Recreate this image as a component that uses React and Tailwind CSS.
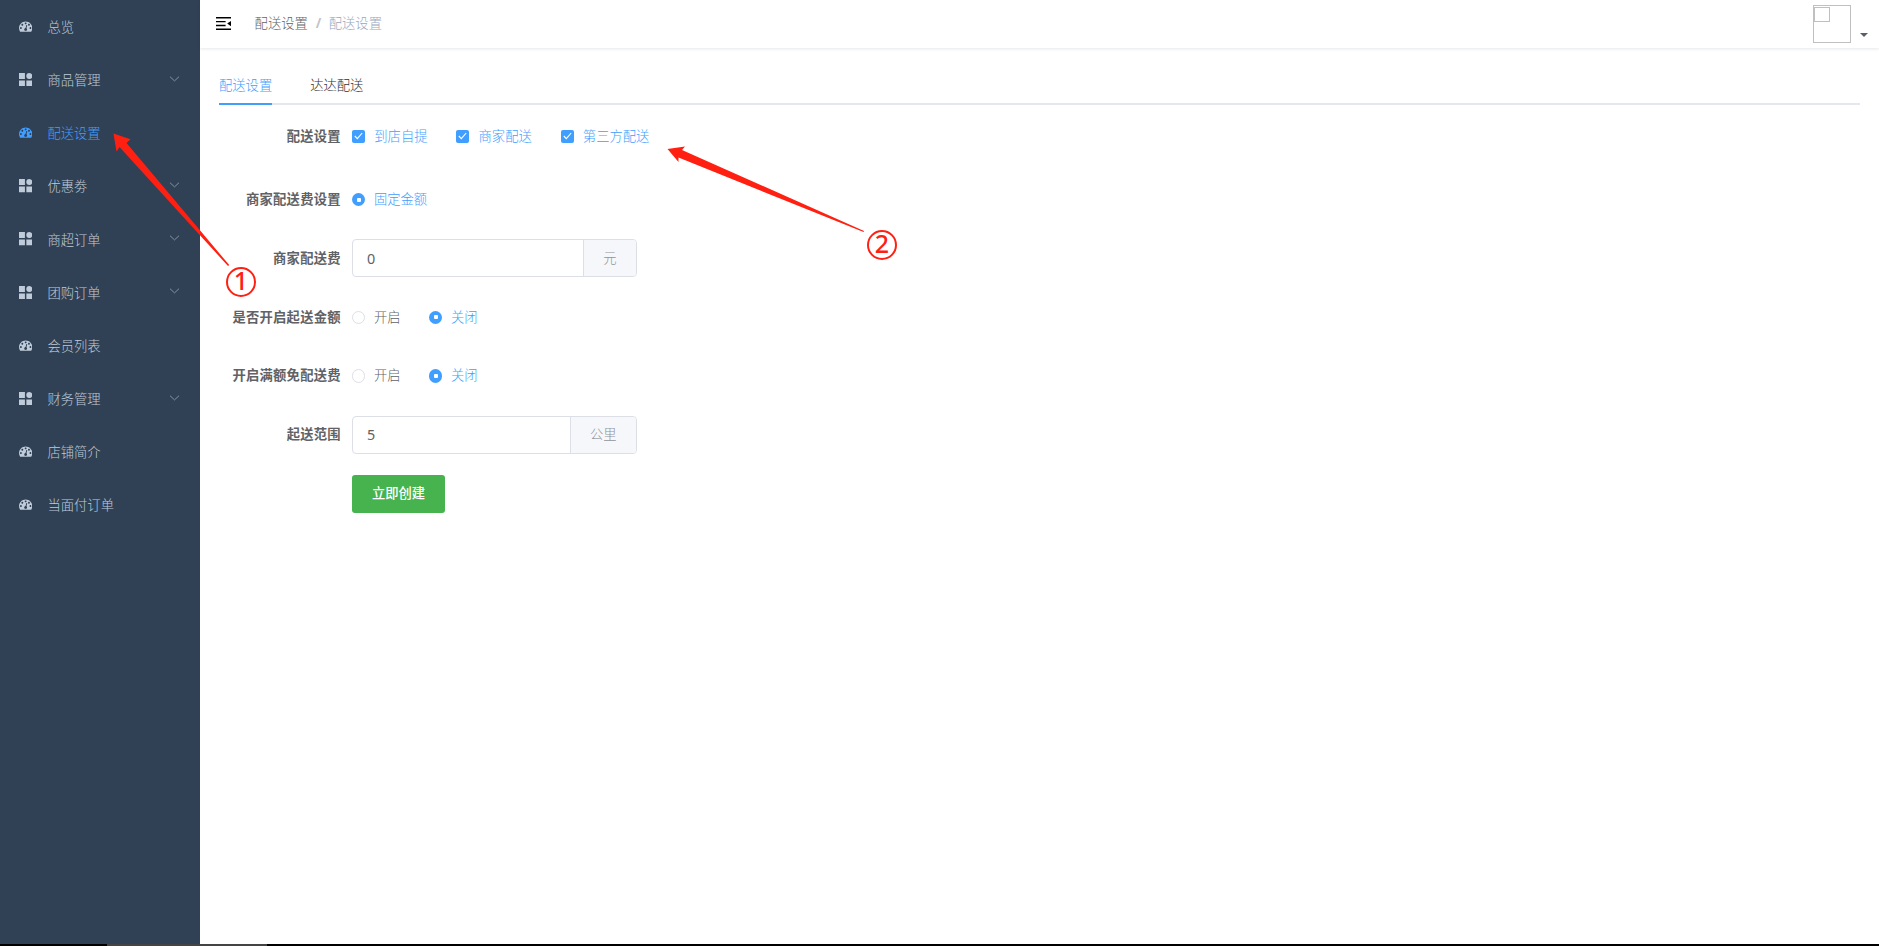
import React, { useState } from "react";

const menuItems = [
  { label: "总览", type: "dashboard" },
  { label: "商品管理", type: "component", children: true },
  { label: "配送设置", type: "dashboard", active: true },
  { label: "优惠劵", type: "component", children: true },
  { label: "商超订单", type: "component", children: true },
  { label: "团购订单", type: "component", children: true },
  { label: "会员列表", type: "dashboard" },
  { label: "财务管理", type: "component", children: true },
  { label: "店铺简介", type: "dashboard" },
  { label: "当面付订单", type: "dashboard" },
];

function DashboardIcon() {
  return (
    <svg className="w-[13.3px] h-[13.3px] shrink-0" viewBox="0 0 128 100" fill="currentColor">
      <path d="M27.429 63.638c0-2.508-.893-4.65-2.679-6.424-1.786-1.775-3.94-2.662-6.464-2.662-2.524 0-4.679.887-6.465 2.662-1.785 1.774-2.678 3.916-2.678 6.424 0 2.508.893 4.65 2.678 6.424 1.786 1.775 3.94 2.662 6.465 2.662 2.524 0 4.678-.887 6.464-2.662 1.786-1.775 2.679-3.916 2.679-6.424zm13.714-31.801c0-2.508-.893-4.65-2.679-6.424-1.785-1.775-3.94-2.662-6.464-2.662-2.524 0-4.679.887-6.464 2.662-1.786 1.774-2.679 3.916-2.679 6.424 0 2.508.893 4.65 2.679 6.424 1.785 1.774 3.94 2.662 6.464 2.662 2.524 0 4.679-.888 6.464-2.662 1.786-1.775 2.679-3.916 2.679-6.424zM71.714 65.98l7.215-27.116c.285-1.23.107-2.378-.536-3.443-.643-1.064-1.56-1.762-2.75-2.094-1.19-.33-2.333-.177-3.429.462-1.095.639-1.81 1.573-2.143 2.804l-7.214 27.116c-2.857.237-5.405 1.266-7.643 3.088-2.238 1.822-3.738 4.152-4.5 6.992-.952 3.644-.476 7.098 1.429 10.364 1.905 3.265 4.69 5.37 8.357 6.317 3.667.947 7.143.474 10.429-1.42 3.285-1.892 5.404-4.66 6.357-8.305.762-2.84.619-5.607-.429-8.305-1.047-2.697-2.762-4.85-5.143-6.46zm47.143-2.342c0-2.508-.893-4.65-2.678-6.424-1.786-1.775-3.94-2.662-6.465-2.662-2.524 0-4.678.887-6.464 2.662-1.786 1.774-2.679 3.916-2.679 6.424 0 2.508.893 4.65 2.679 6.424 1.786 1.775 3.94 2.662 6.464 2.662 2.524 0 4.679-.887 6.465-2.662 1.785-1.775 2.678-3.916 2.678-6.424zm-45.714-45.43c0-2.509-.893-4.65-2.679-6.425C68.68 10.01 66.524 9.122 64 9.122c-2.524 0-4.679.887-6.464 2.661-1.786 1.775-2.679 3.916-2.679 6.425 0 2.508.893 4.65 2.679 6.424 1.785 1.774 3.94 2.662 6.464 2.662 2.524 0 4.679-.888 6.464-2.662 1.786-1.775 2.679-3.916 2.679-6.424zm32 13.629c0-2.508-.893-4.65-2.679-6.424-1.785-1.775-3.94-2.662-6.464-2.662-2.524 0-4.679.887-6.464 2.662-1.786 1.774-2.679 3.916-2.679 6.424 0 2.508.893 4.65 2.679 6.424 1.785 1.774 3.94 2.662 6.464 2.662 2.524 0 4.679-.888 6.464-2.662 1.786-1.775 2.679-3.916 2.679-6.424zM128 63.638c0 12.351-3.357 23.78-10.071 34.286-.905 1.372-2.19 2.058-3.858 2.058H13.93c-1.667 0-2.953-.686-3.858-2.058C3.357 87.465 0 76.037 0 63.638c0-8.613 1.69-16.847 5.071-24.703C8.452 31.08 13 24.312 18.714 18.634c5.715-5.68 12.524-10.199 20.429-13.559C47.048 1.715 55.333.035 64 .035c8.667 0 16.952 1.68 24.857 5.04 7.905 3.36 14.714 7.88 20.429 13.559 5.714 5.678 10.262 12.446 13.643 20.301 3.38 7.856 5.071 16.09 5.071 24.703z" />
    </svg>
  );
}

function ComponentIcon() {
  return (
    <svg className="w-[13.3px] h-[13.3px] shrink-0" viewBox="0 0 128 128" fill="currentColor">
      <path d="M0 0h57v57H0zM0 71h57v57H0zM71 71h57v57H71z" />
      <circle cx="99" cy="28.5" r="28.5" />
    </svg>
  );
}

function Sidebar() {
  return (
    <aside className="w-[200px] shrink-0 bg-[#304156] font-light">
      <ul>
        {menuItems.map((item) => (
          <li
            key={item.label}
            className={`flex items-center h-[53.15px] pl-[19px] pr-[20px] cursor-pointer ${
              item.active ? "text-[#409eff]" : "text-[#bfcbd9]"
            }`}
          >
            {item.type === "dashboard" ? <DashboardIcon /> : <ComponentIcon />}
            <span className="ml-[15.2px] flex-1 pt-[2px]">{item.label}</span>
            {item.children && (
              <svg className="w-[11px] h-[6px] mb-[2px]" viewBox="0 0 11 6" fill="none" stroke="#8391a1">
                <path d="M1 .7l4.5 4.2L10 .7" />
              </svg>
            )}
          </li>
        ))}
      </ul>
    </aside>
  );
}

function Navbar() {
  return (
    <header className="flex justify-between h-[48px] bg-white shadow-[0_1px_3px_rgba(0,21,41,0.1)]">
      <div className="flex items-center h-[47px] pl-[16px]">
        <svg className="w-[15px] h-[13px]" viewBox="0 0 15 13" fill="#000">
          <path d="M0 0h15v1.4H0zM0 3.9h9.6v1.4H0zM0 7.8h9.6v1.4H0zM0 11.6h15V13H0zM15 3.9v5.3L11.2 6.5z" />
        </svg>
        <div className="flex ml-[23.6px] font-light">
          <span className="text-[#606266]">配送设置</span>
          <span className="mx-[8px] font-bold text-[#c0c4cc] w-[5px] text-center">/</span>
          <span className="text-[#97a8be]">配送设置</span>
        </div>
      </div>
      <div className="flex items-end pt-[5px] pr-[11px] h-[43px]">
        <div className="w-[38px] h-[38px] border border-[#c0c0c0] pt-px">
          <div className="w-[16px] h-[15px] border border-[#c0c0c0]"></div>
        </div>
        <svg className="w-[8px] h-[4px] ml-[9px] mb-[6px]" viewBox="0 0 8 4" fill="#5a5e66">
          <path d="M0 0h8L4 4z" />
        </svg>
      </div>
    </header>
  );
}

function Checkbox({ label }) {
  return (
    <label className="flex items-center mr-[28.8px] text-[#409eff] font-light">
      <span className="w-[13px] h-[13px] rounded-[2px] bg-[#409eff] flex items-center justify-center">
        <svg className="w-[9px] h-[8px]" viewBox="0 0 9 8" fill="none" stroke="#fff" strokeWidth="1.1">
          <path d="M.8 4l2.5 2.6L8.2 1" />
        </svg>
      </span>
      <span className="pl-[9.3px]">{label}</span>
    </label>
  );
}

function Radio({ label, checked, onChange }) {
  return (
    <label
      className={`flex items-center mr-[28.5px] cursor-pointer font-light ${checked ? "text-[#409eff]" : "text-[#606266]"}`}
      onClick={onChange}
    >
      {checked ? (
        <span className="w-[13.3px] h-[13.3px] rounded-full bg-[#409eff] flex items-center justify-center">
          <span className="w-[4px] h-[4px] rounded-[1px] bg-white"></span>
        </span>
      ) : (
        <span className="w-[13.3px] h-[13.3px] rounded-full border border-[#dcdfe6] bg-white"></span>
      )}
      <span className="pl-[8.7px]">{label}</span>
    </label>
  );
}

function FormItem({ label, children }) {
  return (
    <div className="flex items-center h-[38px] mb-[20.8px]">
      <div className="w-[133px] pr-[11.2px] text-right font-bold tracking-[0.25px] text-[#606266] shrink-0">{label}</div>
      {children}
    </div>
  );
}

function InputAppend({ value, onChange, unit }) {
  return (
    <div className="flex w-[285px] h-[38px] rounded-[4px] border border-[#dcdfe6] overflow-hidden">
      <input
        className="flex-1 min-w-0 px-[14px] text-[14.4px] text-[#606266] outline-none"
        value={value}
        onChange={(e) => onChange(e.target.value)}
      />
      <span className="flex items-center pl-[19px] pr-[19.4px] bg-[#f5f7fa] border-l border-[#dcdfe6] text-[#909399] font-light">
        {unit}
      </span>
    </div>
  );
}

// Numbered pointers of the guide, drawn over the page
function GuideMarks() {
  return (
    <div className="absolute inset-0 pointer-events-none">
      <svg className="absolute left-0 top-0 w-[920px] h-[300px]" viewBox="0 0 920 300" fill="#ff2012">
        <path d="M113.5 133.5L130.5 139.3L126.5 143L229.2 265L228 266L119.5 147L116.5 151.5z" />
        <path d="M667.5 149L685 146.5L682 150L864 231L863.5 232L678.5 157.5L678.5 162z" />
      </svg>
      <span className="absolute left-[226px] top-[267px] w-[30px] h-[30px] rounded-full border-2 border-[#ff2012] flex items-center justify-center pb-[4px] text-[25px] leading-none text-[#ff2012] font-medium font-['Noto_Sans']">
        1
      </span>
      <span className="absolute left-[867px] top-[230px] w-[30px] h-[30px] rounded-full border-2 border-[#ff2012] flex items-center justify-center pb-[4px] text-[25px] leading-none text-[#ff2012] font-medium font-['Noto_Sans']">
        2
      </span>
    </div>
  );
}

export default function App() {
  const [fee, setFee] = useState("0");
  const [range, setRange] = useState("5");
  const [minAmount, setMinAmount] = useState(false);
  const [freeShipping, setFreeShipping] = useState(false);

  return (
    <div className="relative flex flex-col w-full h-[946px] overflow-hidden bg-white text-[13.3px] leading-[19px] font-['Noto_Sans','Noto_Sans_CJK_SC',sans-serif]">
      <div className="flex flex-1 min-h-0">
        <Sidebar />

        <main className="flex-1 min-w-0">
          <Navbar />

          <div className="px-[19px] pt-[19px]">
            {/* Tabs */}
            <div className="flex h-[38px] border-b-2 border-[#e4e7ed] font-light">
              <div className="h-[38px] leading-[36px] text-[#409eff] border-b-2 border-[#409eff] mr-[38px]">配送设置</div>
              <div className="h-[38px] leading-[36px] text-[#303133]">达达配送</div>
            </div>

            {/* Form */}
            <div className="pt-[12.4px]">
              <div className="mb-[25.2px]">
                <FormItem label="配送设置">
                  <Checkbox label="到店自提" />
                  <Checkbox label="商家配送" />
                  <Checkbox label="第三方配送" />
                </FormItem>
              </div>
              <FormItem label="商家配送费设置">
                <Radio label="固定金额" checked />
              </FormItem>
              <FormItem label="商家配送费">
                <InputAppend value={fee} onChange={setFee} unit="元" />
              </FormItem>
              <FormItem label="是否开启起送金额">
                <Radio label="开启" checked={minAmount} onChange={() => setMinAmount(true)} />
                <Radio label="关闭" checked={!minAmount} onChange={() => setMinAmount(false)} />
              </FormItem>
              <FormItem label="开启满额免配送费">
                <Radio label="开启" checked={freeShipping} onChange={() => setFreeShipping(true)} />
                <Radio label="关闭" checked={!freeShipping} onChange={() => setFreeShipping(false)} />
              </FormItem>
              <FormItem label="起送范围">
                <InputAppend value={range} onChange={setRange} unit="公里" />
              </FormItem>
              <FormItem>
                <button className="w-[93px] h-[38px] rounded-[3px] bg-[#47b34f] text-white font-medium">立即创建</button>
              </FormItem>
            </div>
          </div>
        </main>
      </div>

      <div className="flex h-[2px] bg-black">
        <div className="ml-[107px] w-[160px] bg-[#444]"></div>
      </div>

      <GuideMarks />
    </div>
  );
}
